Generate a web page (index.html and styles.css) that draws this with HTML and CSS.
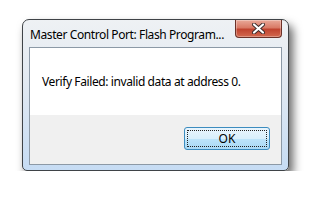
FILE: index.html
```
<!DOCTYPE html>
<html lang="en">
<head>
  <meta charset="UTF-8" />
  <title>Master Control Port: Flash Programmer</title>
  <link rel="stylesheet" href="styles.css">
</head>
<body>
  <div class="window">
    <div class="titlebar">
      <span class="title">Master Control Port: Flash Program...</span>
      <button class="close" type="button">
        <svg width="13" height="11" viewBox="0 0 13 11">
          <path d="M2 1.5 L11 9.5 M11 1.5 L2 9.5" stroke="#3b2a2a" stroke-width="4" stroke-linecap="round"/>
          <path d="M2 1.5 L11 9.5 M11 1.5 L2 9.5" stroke="#ffffff" stroke-width="2.2" stroke-linecap="round"/>
        </svg>
      </button>
    </div>
    <div class="client">
      <div class="message">Verify Failed: invalid data at address 0.</div>
      <div class="footer">
        <button class="ok" type="button"><span>OK</span></button>
      </div>
    </div>
  </div>
</body>
</html>
```

FILE: styles.css
```
body {
  margin: 0;
  padding: 19px 0 0 22px;
  background: #ffffff;
  font-family: "Noto Sans", "Open Sans", sans-serif;
  font-size: 12px;
}
.window {
  width: 253px;
  padding: 0 6px 5px 6px;
  border: 1px solid #3f4347;
  border-radius: 7px 7px 5px 5px;
  background: linear-gradient(#eef1f4 0%, #e2e9f1 40%, #c6dcf4 100%);
  box-shadow: 4px 6px 10px rgba(0,0,0,0.6);
}
.titlebar {
  display: flex;
  justify-content: space-between;
  align-items: flex-start;
  height: 27px;
}
.title {
  margin-top: 6px;
  margin-left: 1px;
  color: #000;
  letter-spacing: -0.4px;
}
.close {
  width: 47px;
  height: 18px;
  padding: 0;
  border: 1px solid #6b3128;
  border-top: none;
  border-radius: 0 0 4px 4px;
  background: linear-gradient(#e9a999 0%, #d97a66 45%, #c0432f 55%, #d2694f 100%);
  box-shadow: inset 0 0 0 1px rgba(255,255,255,0.3);
  display: flex;
  align-items: center;
  justify-content: center;
}
.client {
  border: 1px solid #8c99a6;
  background: #f0f0f0;
}
.message {
  background: #ffffff;
  height: 67px;
  padding-left: 12px;
  display: flex;
  align-items: center;
  color: #000;
  letter-spacing: -0.4px;
}
.footer {
  display: flex;
  justify-content: flex-end;
  padding: 12px 11px 14px 0;
}
.ok {
  width: 86px;
  height: 23px;
  padding: 2px;
  border: 1px solid #3c8cbf;
  border-radius: 3px;
  background: linear-gradient(#e9f5fd 0%, #d9effc 50%, #bde4fa 51%, #a9d9f5 100%);
  font-family: inherit;
  font-size: 12px;
  color: #000;
}
.ok span {
  display: flex;
  align-items: center;
  justify-content: center;
  height: 100%;
  border: 1px dotted #222;
  box-sizing: border-box;
}
```
